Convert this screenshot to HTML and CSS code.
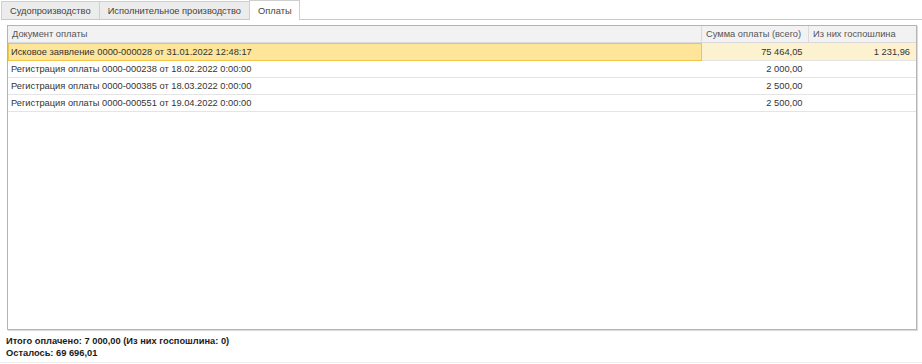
FILE: index.html
```html
<!DOCTYPE html>
<html lang="ru">
<head>
  <meta charset="UTF-8" />
  <title>Оплаты</title>
  <link rel="stylesheet" href="styles.css">
</head>
<body>

  <div class="tabs">
    <div class="tab">Судопроизводство</div>
    <div class="tab">Исполнительное производство</div>
    <div class="tab active">Оплаты</div>
    <div class="tab-rest"></div>
  </div>

  <div class="page">
    <div class="grid-box">
      <table class="grid">
        <thead>
          <tr>
            <th class="col-doc">Документ оплаты</th>
            <th class="col-sum">Сумма оплаты (всего)</th>
            <th class="col-fee">Из них госпошлина</th>
          </tr>
        </thead>
        <tbody>
          <tr class="selected">
            <td class="current">Исковое заявление 0000-000028 от 31.01.2022 12:48:17</td>
            <td class="num">75 464,05</td>
            <td class="num">1 231,96</td>
          </tr>
          <tr>
            <td>Регистрация оплаты 0000-000238 от 18.02.2022 0:00:00</td>
            <td class="num">2 000,00</td>
            <td class="num"></td>
          </tr>
          <tr>
            <td>Регистрация оплаты 0000-000385 от 18.03.2022 0:00:00</td>
            <td class="num">2 500,00</td>
            <td class="num"></td>
          </tr>
          <tr>
            <td>Регистрация оплаты 0000-000551 от 19.04.2022 0:00:00</td>
            <td class="num">2 500,00</td>
            <td class="num"></td>
          </tr>
        </tbody>
      </table>
    </div>

    <div class="totals">
      <div>Итого оплачено: 7 000,00 (Из них госпошлина: 0)</div>
      <div>Осталось: 69 696,01</div>
    </div>
  </div>

  <div class="bottom-line"></div>

</body>
</html>
```

FILE: styles.css
```css
html, body {
  margin: 0;
  padding: 0;
  background-color: #fff;
  font-family: 'Liberation Sans', Arial, sans-serif;
  font-size: 9.3px;
  color: #333;
}

.tabs {
  display: flex;
  height: 20px;
  padding-left: 1px;
}

.tab {
  height: 19px;
  line-height: 19px;
  padding: 0 8px;
  background-color: #ececec;
  border: 1px solid #cfcfcf;
  box-sizing: border-box;
  margin-top: 1px;
  border-bottom: 1px solid #c8c8c8;
  color: #444;
}

.tab + .tab {
  margin-left: -1px;
}

.tab.active {
  background-color: #fff;
  height: 20px;
  margin-top: 0;
  border-bottom: none;
  padding: 0 7px 0 8px;
  line-height: 20px;
}

.tab-rest {
  flex: 1;
  border-bottom: 1px solid #c8c8c8;
  height: 19px;
}

.page {
  padding: 5px 5px 0 7px;
}

.grid-box {
  height: 303px;
  border: 1px solid #b4b4b4;
  box-shadow: 1px 1px 0 #dcdcdc;
  background-color: #fff;
}

.grid {
  width: 100%;
  border-collapse: collapse;
  table-layout: fixed;
}

.grid th {
  height: 16px;
  background-color: #f2f2f2;
  font-weight: normal;
  text-align: left;
  padding: 0 4px;
  color: #555;
  border-bottom: 1px solid #dadada;
  border-left: 1px solid #dadada;
}

.grid th:first-child {
  border-left: none;
}

.col-sum {
  width: 98px;
}

.col-fee {
  width: 99px;
}

.grid td {
  height: 16px;
  padding: 0 3px;
  border-bottom: 1px solid #e4e4e4;
  white-space: nowrap;
  color: #333;
}

.grid td.num {
  text-align: right;
  padding-right: 6px;
}

.grid tr.selected td {
  height: 17px;
  background-color: #fdf2cf;
}

.grid tr.selected td.current {
  background-color: #fde59a;
  outline: 1px solid #f3c44a;
  outline-offset: -1px;
}

.totals {
  padding-top: 5px;
  margin-left: -1px;
  font-weight: bold;
  color: #1a1a1a;
  line-height: 12px;
}

.bottom-line {
  margin-top: 3px;
  border-top: 1px solid #ececec;
}
```
